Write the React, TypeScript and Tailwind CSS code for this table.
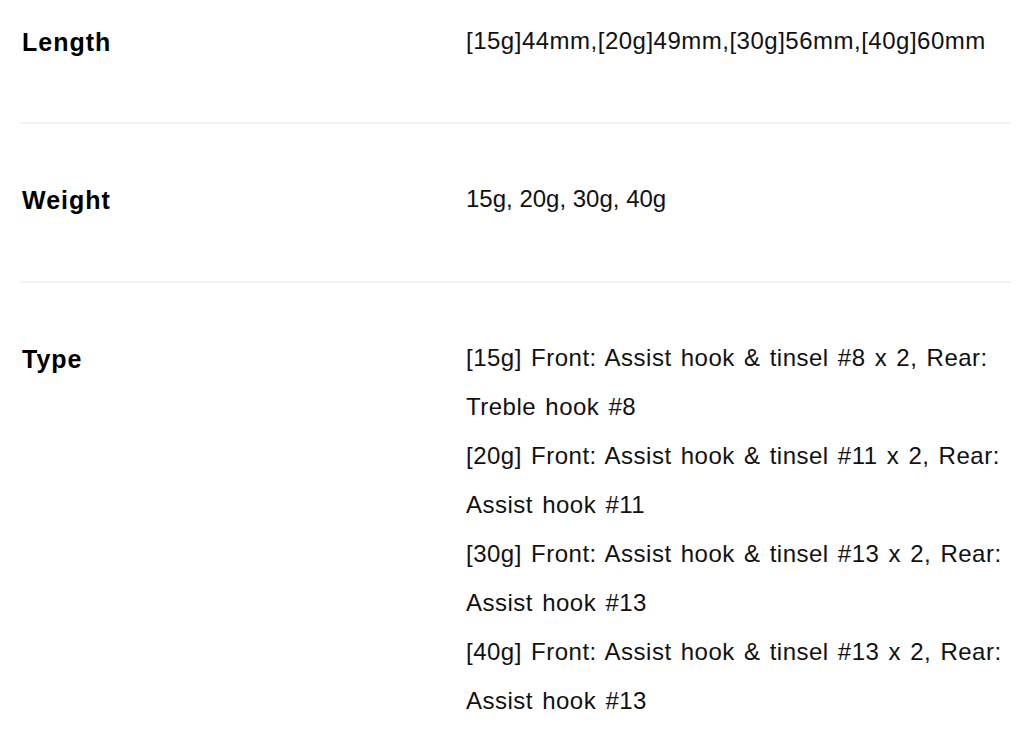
const specs = [
    { label: 'Length', wide: true, lines: ['[15g]44mm,[20g]49mm,[30g]56mm,[40g]60mm'] },
    { label: 'Weight', wide: false, lines: ['15g, 20g, 30g, 40g'] },
    {
        label: 'Type',
        wide: true,
        lines: [
            '[15g] Front: Assist hook & tinsel #8 x 2, Rear:',
            'Treble hook #8',
            '[20g] Front: Assist hook & tinsel #11 x 2, Rear:',
            'Assist hook #11',
            '[30g] Front: Assist hook & tinsel #13 x 2, Rear:',
            'Assist hook #13',
            '[40g] Front: Assist hook & tinsel #13 x 2, Rear:',
            'Assist hook #13',
        ],
    },
];

export default function App() {
    return (
        <div
            className="bg-white text-black min-h-[745px] pl-[20px] pr-[13px]"
            style={{ fontFamily: '"Liberation Sans", "Noto Sans CJK JP", sans-serif' }}
        >
            {specs.map((spec, i) => (
                <div
                    key={spec.label}
                    className={
                        'flex ' +
                        (i === 0 ? 'pt-[16px] pb-[55px] ' : 'pt-[50px] pb-[56px] ') +
                        (i < specs.length - 1 ? 'border-b-2 border-[#f2f2f2]' : '')
                    }
                >
                    <div className="w-[446px] shrink-0 pl-[2px] pt-[2px] text-[25px] leading-[49px] font-bold tracking-[1px]">
                        {spec.label}
                    </div>
                    <div
                        className={
                            'text-[24px] leading-[49px] text-[#111] ' +
                            (spec.wide ? 'tracking-[0.5px] [word-spacing:2px]' : '')
                        }
                    >
                        {spec.lines.map((line, j) => (
                            <div key={j}>{line}</div>
                        ))}
                    </div>
                </div>
            ))}
        </div>
    );
}
